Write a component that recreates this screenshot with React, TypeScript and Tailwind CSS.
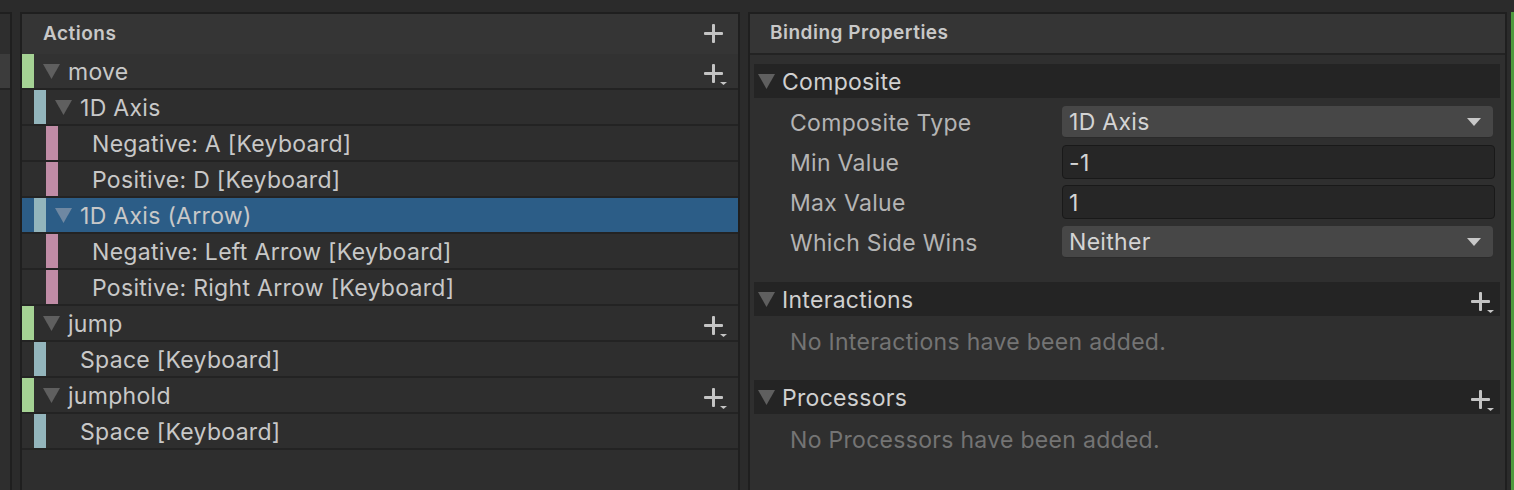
import React from 'react';

type RowKind = 'action' | 'composite' | 'part' | 'binding';

const rows: { kind: RowKind; label: string; selected?: boolean; hover?: boolean }[] = [
  { kind: 'action', label: 'move', hover: true },
  { kind: 'composite', label: '1D Axis' },
  { kind: 'part', label: 'Negative: A [Keyboard]' },
  { kind: 'part', label: 'Positive: D [Keyboard]' },
  { kind: 'composite', label: '1D Axis (Arrow)', selected: true },
  { kind: 'part', label: 'Negative: Left Arrow [Keyboard]' },
  { kind: 'part', label: 'Positive: Right Arrow [Keyboard]' },
  { kind: 'action', label: 'jump' },
  { kind: 'binding', label: 'Space [Keyboard]' },
  { kind: 'action', label: 'jumphold' },
  { kind: 'binding', label: 'Space [Keyboard]' },
];

function Caret({ light }: { light?: boolean }) {
  return (
    <svg width="17" height="15" viewBox="0 0 17 15" className="shrink-0">
      <polygon points="0,0 17,0 8.5,15" fill={light ? '#6f88a2' : '#5f5f5f'} />
    </svg>
  );
}

function PlusIcon({ menu }: { menu?: boolean }) {
  return (
    <svg width="26" height="24" viewBox="0 0 26 24" className="shrink-0">
      <rect x="8" y="2" width="3" height="19" rx="1" fill="#c4c4c4" />
      <rect x="0" y="10" width="19" height="3" rx="1" fill="#c4c4c4" />
      {menu && <polygon points="16,20 23,20 19.5,23" fill="#c4c4c4" />}
    </svg>
  );
}

const rowText = 'flex items-center pt-[2px] text-[23px] tracking-[0.3px] text-[#c8c8c8]';

function ActionRow({ kind, label, selected, hover }: { kind: RowKind; label: string; selected?: boolean; hover?: boolean }) {
  const bg = selected ? 'bg-[#2c5d87]' : hover ? 'bg-[#323232]' : 'bg-[#2e2e2e]';
  return (
    <div className={`flex h-[36px] items-stretch border-b-2 border-[#232323] ${bg}`}>
      {kind === 'action' && (
        <>
          <div className="w-[12px] bg-[#a5d294]" />
          <div className="ml-[9px] flex items-center pt-[1px]">
            <Caret />
          </div>
          <span className={`ml-[8px] ${rowText}`}>{label}</span>
          <div className="ml-auto mr-[8px] flex items-center pt-[6px]">
            <PlusIcon menu />
          </div>
        </>
      )}
      {kind === 'composite' && (
        <>
          <div className="ml-[12px] w-[12px] bg-[#93b5bc]" />
          <div className="ml-[9px] flex items-center pt-[1px]">
            <Caret light={selected} />
          </div>
          <span className={`ml-[8px] ${rowText}`}>{label}</span>
        </>
      )}
      {kind === 'part' && (
        <>
          <div className="ml-[24px] w-[12px] bg-[#c08ca6]" />
          <span className={`ml-[34px] ${rowText}`}>{label}</span>
        </>
      )}
      {kind === 'binding' && (
        <>
          <div className="ml-[12px] w-[12px] bg-[#93b5bc]" />
          <span className={`ml-[34px] ${rowText}`}>{label}</span>
        </>
      )}
    </div>
  );
}

function SectionHeader({ title, plus }: { title: string; plus?: boolean }) {
  return (
    <div className="ml-[4px] mr-[5px] flex h-[34px] items-center bg-[#242424] pl-[4px]">
      <Caret />
      <span className="ml-[7px] pt-[2px] text-[23px] tracking-[0.3px] text-[#d0d0d0]">{title}</span>
      {plus && (
        <div className="ml-auto mr-[3px] pt-[6px]">
          <PlusIcon menu />
        </div>
      )}
    </div>
  );
}

function Dropdown({ value }: { value: string }) {
  return (
    <div className="flex h-[32px] w-[431px] items-center rounded-[4px] border-b border-[#2a2a2a] bg-[#474747] pl-[7px] pr-[12px]">
      <span className="pt-[2px] text-[23px] tracking-[0.3px] text-[#d4d4d4]">{value}</span>
      <svg width="14" height="8" viewBox="0 0 14 8" className="ml-auto">
        <polygon points="0,0 14,0 7,8" fill="#c8c8c8" />
      </svg>
    </div>
  );
}

function TextField({ value }: { value: string }) {
  return (
    <div className="flex h-[34px] w-[433px] items-center rounded-[4px] border border-[#191919] bg-[#262626] pl-[6px]">
      <span className="pt-[2px] text-[23px] tracking-[0.3px] text-[#d4d4d4]">{value}</span>
    </div>
  );
}

function FieldRow({ label, children }: { label: string; children: React.ReactNode }) {
  return (
    <div className="flex h-[40px] items-center">
      <span className="w-[313px] shrink-0 pl-[40px] pt-[2px] text-[23px] tracking-[0.3px] text-[#b4b4b4]">{label}</span>
      <div className="-ml-[1px]">{children}</div>
    </div>
  );
}

export default function App() {
  return (
    <div
      className="flex h-[490px] w-[1514px] overflow-hidden bg-[#2b2b2b] pt-[12px]"
      style={{ fontFamily: 'Inter, "Noto Sans", sans-serif' }}
    >
      {/* left stub of the action maps pane */}
      <div className="flex w-[12px] flex-col border-r-2 border-t-2 border-[#1f1f1f] bg-[#2e2e2e]">
        <div className="h-[40px]" />
        <div className="h-[36px] border-b-2 border-[#232323] bg-[#3c3c3c]" />
      </div>

      <div className="w-[8px]" />

      {/* actions pane */}
      <div className="flex w-[720px] flex-col border-x-2 border-t-2 border-[#1f1f1f] bg-[#2e2e2e]">
        <div className="flex h-[40px] shrink-0 items-center bg-[#353535] pl-[21px] pr-[8px]">
          <span className="text-[19px] font-semibold tracking-[0.5px] text-[#c8c8c8]">Actions</span>
          <div className="ml-auto">
            <PlusIcon />
          </div>
        </div>
        {rows.map((r, i) => (
          <ActionRow key={i} {...r} />
        ))}
      </div>

      <div className="w-[8px]" />

      {/* binding properties pane */}
      <div className="flex w-[759px] flex-col border-x-2 border-t-2 border-[#1f1f1f] bg-[#2f2f2f]">
        <div className="flex h-[41px] shrink-0 items-center border-b-2 border-[#232323] bg-[#353535] pl-[20px]">
          <span className="text-[19px] font-semibold tracking-[0.5px] text-[#c8c8c8]">Binding Properties</span>
        </div>
        <div className="flex flex-col pt-[9px]">
          <SectionHeader title="Composite" />
          <div className="flex flex-col pt-[4px]">
            <FieldRow label="Composite Type">
              <Dropdown value="1D Axis" />
            </FieldRow>
            <FieldRow label="Min Value">
              <TextField value="-1" />
            </FieldRow>
            <FieldRow label="Max Value">
              <TextField value="1" />
            </FieldRow>
            <FieldRow label="Which Side Wins">
              <Dropdown value="Neither" />
            </FieldRow>
          </div>
          <div className="mt-[20px]">
            <SectionHeader title="Interactions" plus />
          </div>
          <div className="flex h-[50px] items-center pl-[40px] pt-[2px] text-[23px] tracking-[0.3px] text-[#747474]">
            No Interactions have been added.
          </div>
          <div className="mt-[14px]">
            <SectionHeader title="Processors" plus />
          </div>
          <div className="flex h-[50px] items-center pl-[40px] pt-[2px] text-[23px] tracking-[0.3px] text-[#747474]">
            No Processors have been added.
          </div>
        </div>
      </div>

      <div className="flex w-[7px] justify-end bg-[#2b2b2b]">
        <div className="w-[3px] bg-[#4e9a3e]" />
      </div>
    </div>
  );
}
